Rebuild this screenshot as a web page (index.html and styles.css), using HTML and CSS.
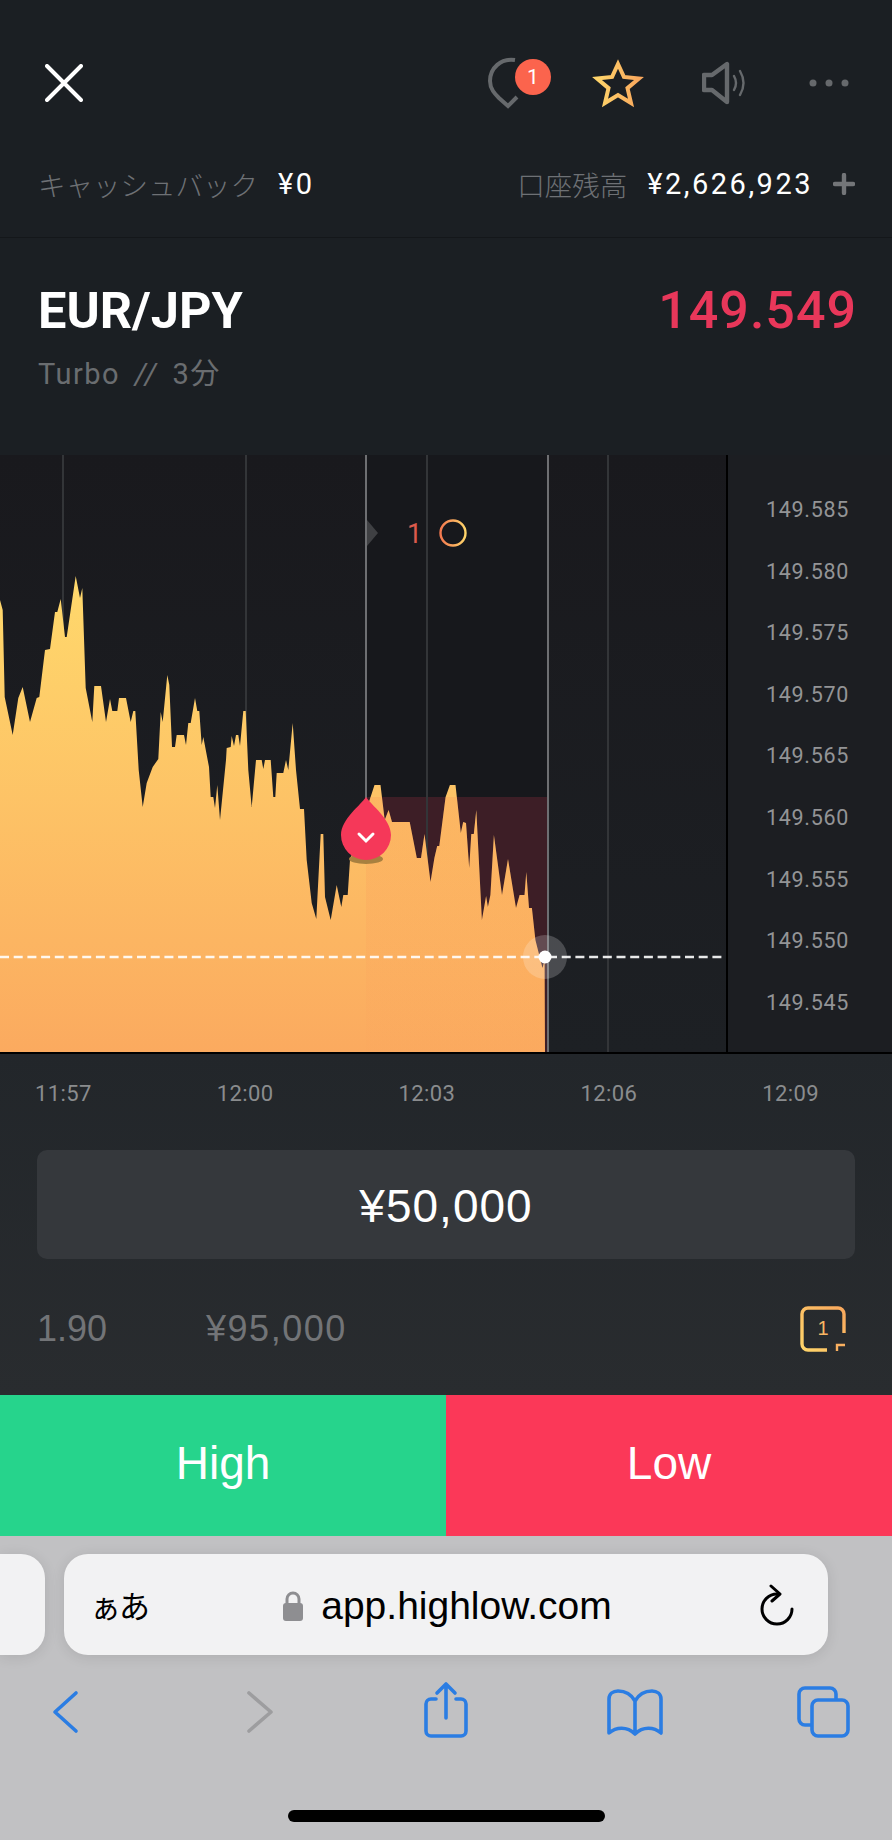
FILE: index.html
```html
<!DOCTYPE html>
<html lang="ja">
<head>
    <meta charset="UTF-8">
    <meta name="viewport" content="width=device-width, initial-scale=1.0">
    <title>EUR/JPY Turbo</title>
    <link rel="stylesheet" href="styles.css">
</head>
<body>
    <header class="top-bar">
        <div class="icon-row">
            <svg width="38" height="38" viewBox="0 0 38 38">
                <path d="M2 2 L36 36 M36 2 L2 36" stroke="#fff" stroke-width="4" stroke-linecap="round"/>
            </svg>
            <div class="icon-group">
                <div class="icon-slot">
                    <svg width="60" height="54" viewBox="0 0 60 54">
                        <path d="M28 4 C14 2 3 12 3 25 C3 33 8 38 12 42 L21 50 L30 41" fill="none" stroke="#66696c" stroke-width="4"/>
                    </svg>
                    <span class="badge">1</span>
                </div>
                <div class="icon-slot">
                    <svg class="star-icon" width="56" height="54" viewBox="0 0 56 54">
                        <defs>
                            <linearGradient id="star-grad" x1="0" y1="0" x2="1" y2="0">
                                <stop offset="0" stop-color="#ffd56a"/>
                                <stop offset="1" stop-color="#f9a85d"/>
                            </linearGradient>
                        </defs>
                        <path d="M28 8 L33.9 20.9 L49 22.5 L37.5 32.1 L41 47 L28 39 L15 47 L18.5 32.1 L7 22.5 L22.1 20.9 Z" fill="none" stroke="url(#star-grad)" stroke-width="4"/>
                    </svg>
                </div>
                <div class="icon-slot">
                    <svg width="46" height="44" viewBox="0 0 46 44">
                        <path d="M2 14 H10 L25 3 V41 L10 29 H2 Z" fill="none" stroke="#66696c" stroke-width="4.4" stroke-linejoin="round"/>
                        <path d="M32 15 Q36 22 32 29 M38 10 Q45 22 38 34" fill="none" stroke="#66696c" stroke-width="2.4" stroke-linecap="round"/>
                    </svg>
                </div>
                <div class="icon-slot">
                    <svg width="40" height="10" viewBox="0 0 40 10">
                        <circle cx="4" cy="5" r="3.5" fill="#66696c"/>
                        <circle cx="20" cy="5" r="3.5" fill="#66696c"/>
                        <circle cx="36" cy="5" r="3.5" fill="#66696c"/>
                    </svg>
                </div>
            </div>
        </div>
        <div class="balance-row">
            <div class="balance-item">
                <span class="balance-label">キャッシュバック</span>
                <span class="balance-value">¥0</span>
            </div>
            <div class="balance-item">
                <span class="balance-label">口座残高</span>
                <span class="balance-value">¥2,626,923</span>
                <svg class="plus-icon" width="22" height="22" viewBox="0 0 22 22">
                    <path d="M11 2 V20 M2 11 H20" stroke="#737578" stroke-width="4.4" stroke-linecap="round"/>
                </svg>
            </div>
        </div>
    </header>

    <section class="pair">
        <div class="pair-row">
            <h1 class="pair-name">EUR/JPY</h1>
            <div class="pair-rate">149.549</div>
        </div>
        <div class="pair-type">Turbo <span class="slashes">//</span> 3分</div>
    </section>

    <section class="chart">
        <div class="plot">
            <svg width="726" height="597" viewBox="0 455 726 597">
                <defs>
                    <linearGradient id="area-grad" x1="0" y1="0" x2="0" y2="1">
                        <stop offset="0" stop-color="#ffd96c"/>
                        <stop offset="1" stop-color="#fbaa5f"/>
                    </linearGradient>
                    <linearGradient id="area-tint" x1="0" y1="0" x2="0" y2="1">
                        <stop offset="0" stop-color="#f98a55" stop-opacity=".22"/>
                        <stop offset="1" stop-color="#f98a55" stop-opacity=".02"/>
                    </linearGradient>
                    <linearGradient id="ring-grad" x1="0" y1="0" x2="1" y2="0">
                        <stop offset="0" stop-color="#f4794f"/>
                        <stop offset="1" stop-color="#ffd56a"/>
                    </linearGradient>
                    <path id="area" d="M0 600 L2.7 610 L4.7 697 L12.7 735 L18.3 698 L22.7 687 L30 722 L36.7 698 L39.3 697 L45 650 L50 649 L55 612 L57.3 612 L60.7 599 L65 637 L66.7 637 L75.7 576 L80 598 L82.3 588 L85.7 688 L92.3 722 L94.3 686 L101 686 L106 722 L110 699 L112.3 711 L117.3 711 L119 698 L126 698 L130.7 722 L133.3 711 L135.3 711 L138.7 770 L142.7 807 L146.7 783 L152.7 767 L158.3 759 L160.7 712 L162.7 722 L167.3 675 L169.3 685 L172 747 L175 747 L176.7 735 L184 735 L186 745 L188.3 723 L190.7 723 L195 698 L197.3 711 L199.3 711 L201.7 745 L203.3 737 L209 767 L210.7 797 L213.3 797 L215 808 L217.3 785 L220 820 L226 760 L226.7 748 L230.7 747 L231.7 736 L234 746 L236 735 L238.3 735 L240 746 L243.3 711 L245.7 711 L248.3 770 L251.7 807 L256 760 L261.7 760 L263.3 769 L265 760 L270.7 760 L273.3 797 L275.3 797 L276.7 773 L283.3 773 L286 760 L288.3 770 L292.7 723 L296 770 L300 809 L304 809 L306.7 860 L311.7 903 L316.3 919 L320.7 834 L323.3 834 L325 897 L330.7 920 L336.7 885 L341.3 907 L343.3 895 L347.7 895 L350 860 L374.5 785 L380.5 785 L384.7 820 L388.6 810 L392 822 L409.7 822 L416.8 858 L421 858 L424.5 834 L430.5 882 L434.4 858 L437.2 846 L439.3 846 L445.6 797 L449.9 785 L455.5 785 L460.8 833 L463.2 822 L466 823 L469.2 868 L471.3 834 L473.8 834 L476.3 810 L481.9 920 L486.1 896 L487.9 907 L490.4 895 L493.9 835 L502 895 L508 859 L516 908 L519.6 895 L524.5 895 L526.3 872 L529 908 L531.9 908 L535.4 940 L542.5 968 L544.6 960 L545 1052 L0 1052 Z"/>
                    <clipPath id="area-clip"><use href="#area"/></clipPath>
                </defs>

                <rect x="366" y="455" width="182" height="597" fill="#17181c"/>
                <rect x="366" y="797" width="182" height="255" fill="#3d1e26"/>

                <path d="M63 455 V1052 M246 455 V1052 M427 455 V1052 M608 455 V1052" stroke="#333538" stroke-width="2"/>
                <path d="M366 455 V1052 M548 455 V1052" stroke="#6e6f72" stroke-width="2"/>

                <use href="#area" fill="url(#area-grad)"/>
                <rect x="366" y="797" width="179" height="255" fill="url(#area-tint)" clip-path="url(#area-clip)"/>

                <path d="M367 520 L378 533 L367 546 Z" fill="#3f4043"/>
                <text class="mark-count" x="407" y="543">1</text>
                <circle cx="453" cy="533" r="12.5" fill="none" stroke="url(#ring-grad)" stroke-width="2.4"/>

                <line x1="0" y1="957" x2="724" y2="957" stroke="#fff" stroke-opacity=".9" stroke-width="2.6" stroke-dasharray="9 4.7"/>
                <circle cx="545" cy="957" r="22" fill="#fff" fill-opacity=".2"/>
                <circle cx="545" cy="957" r="6.5" fill="#fff"/>

                <ellipse cx="366" cy="859" rx="17" ry="5" fill="#a8803f"/>
                <path d="M366 797 C361 805 341 819 341 835 A25 25 0 0 0 391 835 C391 819 371 805 366 797 Z" fill="#f53859"/>
                <path d="M359 834 L366 841 L373 834" fill="none" stroke="#fff" stroke-width="3" stroke-linecap="round"/>
            </svg>
        </div>
        <div class="price-axis">
            <div class="price">149.585</div>
            <div class="price">149.580</div>
            <div class="price">149.575</div>
            <div class="price">149.570</div>
            <div class="price">149.565</div>
            <div class="price">149.560</div>
            <div class="price">149.555</div>
            <div class="price">149.550</div>
            <div class="price">149.545</div>
        </div>
    </section>

    <section class="order-panel">
        <div class="time-axis">
            <span>11:57</span>
            <span>12:00</span>
            <span>12:03</span>
            <span>12:06</span>
            <span>12:09</span>
        </div>
        <div class="stake-box">¥50,000</div>
        <div class="payout-row">
            <span class="payout-rate">1.90</span>
            <span class="payout-amount">¥95,000</span>
            <div class="one-click">
                <svg width="46" height="46" viewBox="0 0 46 46">
                    <defs>
                        <linearGradient id="click-grad" x1="0" y1="1" x2="1" y2="0">
                            <stop offset="0" stop-color="#ffd56a"/>
                            <stop offset="1" stop-color="#f9a85d"/>
                        </linearGradient>
                    </defs>
                    <path d="M44 27 V8 A6 6 0 0 0 38 2 H8 A6 6 0 0 0 2 8 V38 A6 6 0 0 0 8 44 H27" fill="none" stroke="url(#click-grad)" stroke-width="3.4"/>
                    <path d="M37 45 V39 H45" fill="none" stroke="#f9b060" stroke-width="2.4"/>
                </svg>
                <span class="one-click-num">1</span>
            </div>
        </div>
    </section>

    <div class="trade-buttons">
        <button class="trade-btn high-btn" type="button">High</button>
        <button class="trade-btn low-btn" type="button">Low</button>
    </div>

    <footer class="safari">
        <div class="address-row">
            <div class="tab-stub"></div>
            <div class="address-bar">
                <span class="reader">ぁあ</span>
                <div class="url">
                    <svg width="22" height="32" viewBox="0 0 22 32">
                        <path d="M5 14 V9 A6 6 0 0 1 17 9 V14" fill="none" stroke="#8e8e91" stroke-width="3"/>
                        <rect x="1" y="13" width="20" height="18" rx="3" fill="#8e8e91"/>
                    </svg>
                    <span>app.highlow.com</span>
                </div>
                <svg width="36" height="42" viewBox="0 0 36 42">
                    <path d="M18 10 A15 15 0 1 0 33 25" fill="none" stroke="#000" stroke-width="3" stroke-linecap="round"/>
                    <path d="M12 2 L21 10 L13 17" fill="none" stroke="#000" stroke-width="3" stroke-linecap="round" stroke-linejoin="round"/>
                </svg>
            </div>
        </div>
        <nav class="toolbar">
            <svg class="tool" width="60" height="60" viewBox="0 0 60 60">
                <path d="M41 13 L20 32 L41 51" stroke="#2b7de3"/>
            </svg>
            <svg class="tool" width="60" height="60" viewBox="0 0 60 60">
                <path d="M24 13 L46 32 L24 51" stroke="#9d9d9f"/>
            </svg>
            <svg class="tool" width="60" height="60" viewBox="0 0 60 60">
                <path d="M21 19 H16 A5 5 0 0 0 11 24 V51 A5 5 0 0 0 16 56 H46 A5 5 0 0 0 51 51 V24 A5 5 0 0 0 46 19 H41 M31 38 V4 M22 13 L31 4 L40 13" stroke="#2b7de3"/>
            </svg>
            <svg class="tool" width="60" height="60" viewBox="0 0 60 60">
                <path d="M30 21 C26 14 20 11 13 11 C8 11 4 14 4 19 V53 C11 47 22 46 30 54 C38 46 49 47 56 53 V19 C56 14 52 11 47 11 C40 11 34 14 30 21 V54" stroke="#2b7de3"/>
            </svg>
            <svg class="tool" width="60" height="60" viewBox="0 0 60 60">
                <path d="M41 19 V14 A6 6 0 0 0 35 8 H10 A6 6 0 0 0 4 14 V39 A6 6 0 0 0 10 45 H16" stroke="#2b7de3"/>
                <rect x="17" y="20" width="36" height="36" rx="6" stroke="#2b7de3"/>
            </svg>
        </nav>
        <div class="home-bar"></div>
    </footer>
</body>
</html>
```

FILE: styles.css
```css
body {
    margin: 0;
    padding: 0;
    width: 892px;
    height: 1840px;
    overflow: hidden;
    display: flex;
    flex-direction: column;
    background-color: #1b1f23;
    font-family: Roboto, "Noto Sans CJK JP", sans-serif;
}
svg {
    display: block;
}
.top-bar {
    height: 237px;
    border-bottom: 1px solid #14171a;
}
.icon-row {
    height: 166px;
    display: flex;
    align-items: center;
    justify-content: space-between;
    padding-left: 45px;
    padding-right: 11px;
}
.icon-group {
    display: flex;
    align-items: center;
}
.icon-slot {
    width: 104px;
    display: flex;
    justify-content: center;
    position: relative;
}
.star-icon {
    margin-right: 6px;
}
.badge {
    position: absolute;
    left: 50px;
    top: 3px;
    width: 36px;
    height: 36px;
    border-radius: 50%;
    background-color: #fb644d;
    color: #fff;
    font-size: 21px;
    line-height: 36px;
    text-align: center;
}
.balance-row {
    height: 36px;
    display: flex;
    align-items: center;
    justify-content: space-between;
    padding: 0 37px 0 38px;
}
.balance-item {
    display: flex;
    align-items: center;
}
.balance-label {
    color: #6e7175;
    font-size: 27.5px;
    font-weight: 300;
}
.balance-value {
    margin-left: 20px;
    color: #fff;
    font-size: 29px;
    letter-spacing: 2.5px;
}
.plus-icon {
    margin-left: 20px;
}
.pair {
    height: 217px;
    padding: 0 38px;
    box-sizing: border-box;
}
.pair-row {
    display: flex;
    align-items: center;
    justify-content: space-between;
    padding-top: 45px;
}
.pair-name {
    margin: 0;
    color: #fff;
    font-size: 50.5px;
    line-height: 56px;
    font-weight: 700;
}
.pair-rate {
    margin-right: -3px;
    color: #e8375a;
    font-size: 52px;
    line-height: 56px;
    font-weight: 500;
    letter-spacing: 1px;
}
.pair-type {
    margin-top: 17px;
    color: #6a6d70;
    font-size: 29px;
    line-height: 36px;
    letter-spacing: 1.5px;
}
.slashes {
    margin: 0 6px;
    font-style: italic;
}
.chart {
    height: 599px;
    display: flex;
    border-bottom: 2px solid #000;
    box-sizing: border-box;
    background-color: #1c1e22;
}
.plot {
    width: 726px;
    height: 597px;
    background: linear-gradient(#19191d, #1d2024);
}
.price-axis {
    flex: 1;
    border-left: 2px solid #000;
    padding-top: 24px;
    padding-left: 38px;
}
.price {
    height: 61.6px;
    line-height: 61.6px;
    color: #939496;
    font-size: 21.5px;
    letter-spacing: .7px;
}
.mark-count {
    fill: #dc5a4c;
    font-size: 27px;
}
.order-panel {
    height: 341px;
    background: linear-gradient(#22262a, #292c2f);
}
.time-axis {
    height: 96px;
    display: flex;
    align-items: center;
    justify-content: space-between;
    padding: 0 73px 18px 35px;
    box-sizing: border-box;
    color: #8a8c8e;
    font-size: 22px;
    letter-spacing: .4px;
}
.stake-box {
    height: 105px;
    margin: 0 37px;
    padding-top: 4px;
    border-radius: 10px;
    background-color: #35383c;
    color: #fff;
    font-family: "Liberation Sans", Arial, sans-serif;
    font-size: 46px;
    line-height: 105px;
    letter-spacing: 1px;
    text-align: center;
}
.payout-row {
    display: flex;
    align-items: center;
    padding: 47px 46px 0 37px;
    color: #727477;
    font-family: "Liberation Sans", Arial, sans-serif;
    font-size: 36px;
}
.payout-amount {
    margin-left: 99px;
    letter-spacing: 1.5px;
}
.one-click {
    margin-left: auto;
    position: relative;
}
.one-click-num {
    position: absolute;
    left: 0;
    right: 0;
    top: 11px;
    color: #f9b663;
    font-size: 20px;
    text-align: center;
}
.trade-buttons {
    height: 141px;
    display: flex;
}
.trade-btn {
    flex: 1;
    padding: 0 0 6px;
    border: none;
    color: #fff;
    font-family: "Liberation Sans", Arial, sans-serif;
    font-size: 46px;
}
.high-btn {
    background-color: #26d48c;
}
.low-btn {
    background-color: #fb3858;
}
.safari {
    flex: 1;
    padding-top: 18px;
    background-color: #c1c1c3;
}
.address-row {
    height: 101px;
    display: flex;
    gap: 19px;
}
.tab-stub {
    width: 45px;
    border-radius: 0 24px 24px 0;
    background-color: #f2f2f3;
    box-shadow: 0 2px 14px rgba(0, 0, 0, .1);
}
.address-bar {
    width: 764px;
    display: flex;
    align-items: center;
    justify-content: space-between;
    padding: 0 33px 0 26px;
    box-sizing: border-box;
    border-radius: 24px;
    background-color: #f2f2f3;
    box-shadow: 0 2px 14px rgba(0, 0, 0, .1);
}
.reader {
    font-family: "Noto Sans CJK JP", sans-serif;
    font-size: 31px;
    letter-spacing: -2px;
    color: #000;
}
.url {
    display: flex;
    align-items: center;
    gap: 17px;
    margin-right: 13px;
    padding-top: 2px;
    color: #000;
    font-family: "Liberation Sans", Arial, sans-serif;
    font-size: 39px;
}
.toolbar {
    display: flex;
    margin-top: 25px;
    margin-left: 35px;
    gap: 130px;
}
.tool {
    flex: none;
    fill: none;
    stroke-width: 3.6;
    stroke-linecap: round;
    stroke-linejoin: round;
}
.home-bar {
    width: 317px;
    height: 12px;
    margin: 70px auto 0;
    border-radius: 6px;
    background-color: #000;
}
```
